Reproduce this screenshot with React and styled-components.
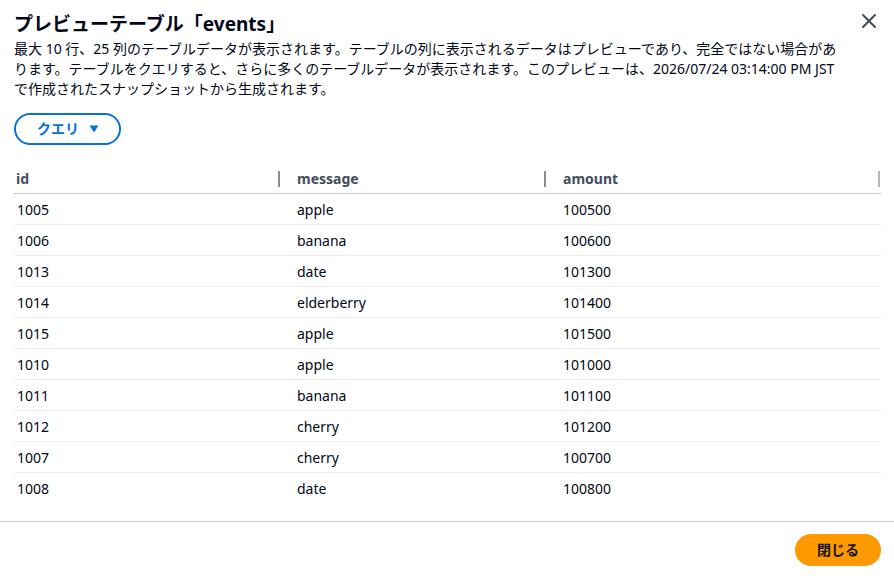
import React from "react";
import styled, { createGlobalStyle } from "styled-components";

const Global = createGlobalStyle`
  html, body { margin: 0; padding: 0; background: #ffffff; }
  body {
    font-family: "Noto Sans", "Noto Sans CJK JP", sans-serif;
    color: #000716;
    -webkit-font-smoothing: antialiased;
  }
  * { box-sizing: border-box; }
`;

const Modal = styled.div`
  width: 894px;
  height: 576px;
  display: flex;
  flex-direction: column;
  background: #ffffff;
`;

const Body = styled.div`
  flex: 1;
  padding: 10px 13px 0 14px;
  display: flex;
  flex-direction: column;
`;

const HeaderRow = styled.div`
  display: flex;
  align-items: flex-start;
  justify-content: space-between;
`;

const HeaderText = styled.div`
  width: 840px;
`;

const Title = styled.h2`
  margin: 0;
  font-size: 19px;
  line-height: 28px;
  font-weight: 700;
  color: #000716;
`;

const Description = styled.p`
  margin: 1px 0 0;
  font-size: 14px;
  line-height: 20px;
  color: #000716;
`;

const CloseButton = styled.button`
  border: none;
  background: none;
  padding: 0;
  margin: 3px 4px 0 0;
  width: 16px;
  height: 16px;
  display: flex;
  cursor: pointer;
`;

const QueryButton = styled.button`
  margin-top: 14px;
  align-self: flex-start;
  height: 32px;
  display: inline-flex;
  align-items: center;
  gap: 10px;
  padding: 0 20px 0 21px;
  border: 2px solid #0972d3;
  border-radius: 20px;
  background: #ffffff;
  color: #0972d3;
  font-family: inherit;
  font-size: 14px;
  font-weight: 700;
  line-height: 20px;
`;

const Table = styled.div`
  margin-top: 20px;
  width: 867px;
  display: grid;
  grid-template-columns: 267px 266px 334px;
`;

const HeadCell = styled.div`
  position: relative;
  height: 29px;
  display: flex;
  align-items: center;
  padding-left: ${(p) => (p.$first ? "2px" : "16px")};
  padding-bottom: 2px;
  border-bottom: 1px solid #c6c6cd;
  font-size: 14px;
  font-weight: 700;
  color: #414d5c;
  &::after {
    content: "";
    position: absolute;
    right: 1px;
    top: 6px;
    width: 2px;
    height: 16px;
    background: ${(p) => (p.$last ? "#b4b4bb" : "#8c8c94")};
  }
`;

const Cell = styled.div`
  height: 31px;
  display: flex;
  align-items: center;
  padding-left: ${(p) => (p.$first ? "3px" : "16px")};
  border-bottom: ${(p) => (p.$lastRow ? "none" : "1px solid #e9ebed")};
  font-size: 14px;
  color: #000716;
`;

const Footer = styled.div`
  border-top: 1px solid #c6c6cd;
  height: 55px;
  display: flex;
  justify-content: flex-end;
  align-items: flex-start;
  padding: 12px 13px 0 0;
`;

const PrimaryButton = styled.button`
  height: 32px;
  padding: 0 20px;
  border: 2px solid #ff9900;
  border-radius: 16px;
  background: #ff9900;
  color: #0f141a;
  font-family: inherit;
  font-size: 14px;
  font-weight: 700;
  line-height: 20px;
`;

const rows = [
  ["1005", "apple", "100500"],
  ["1006", "banana", "100600"],
  ["1013", "date", "101300"],
  ["1014", "elderberry", "101400"],
  ["1015", "apple", "101500"],
  ["1010", "apple", "101000"],
  ["1011", "banana", "101100"],
  ["1012", "cherry", "101200"],
  ["1007", "cherry", "100700"],
  ["1008", "date", "100800"],
];

const columns = ["id", "message", "amount"];

export default function App() {
  return (
    <>
      <Global />
      <Modal>
        <Body>
          <HeaderRow>
            <HeaderText>
              <Title>プレビューテーブル「events」</Title>
              <Description>
                最大 10 行、25 列のテーブルデータが表示されます。テーブルの列に表示されるデータはプレビューであり、完全ではない場合があ
                <br />
                ります。テーブルをクエリすると、さらに多くのテーブルデータが表示されます。このプレビューは、2026/07/24 03:14:00 PM JST
                <br />
                で作成されたスナップショットから生成されます。
              </Description>
            </HeaderText>
            <CloseButton aria-label="閉じる">
              <svg width="16" height="16" viewBox="0 0 16 16">
                <path d="M2 2l12 12M14 2L2 14" stroke="#414d5c" strokeWidth="2" fill="none" strokeLinecap="round" />
              </svg>
            </CloseButton>
          </HeaderRow>
          <QueryButton>
            クエリ
            <svg width="10" height="8" viewBox="0 0 10 8">
              <path d="M0.5 0.5h9L5 7.5z" fill="#0972d3" />
            </svg>
          </QueryButton>
          <Table>
            {columns.map((c, i) => (
              <HeadCell key={c} $first={i === 0} $last={i === columns.length - 1}>
                {c}
              </HeadCell>
            ))}
            {rows.map((r, ri) =>
              r.map((v, ci) => (
                <Cell key={ri + "-" + ci} $first={ci === 0} $lastRow={ri === rows.length - 1}>
                  {v}
                </Cell>
              ))
            )}
          </Table>
        </Body>
        <Footer>
          <PrimaryButton>閉じる</PrimaryButton>
        </Footer>
      </Modal>
    </>
  );
}
